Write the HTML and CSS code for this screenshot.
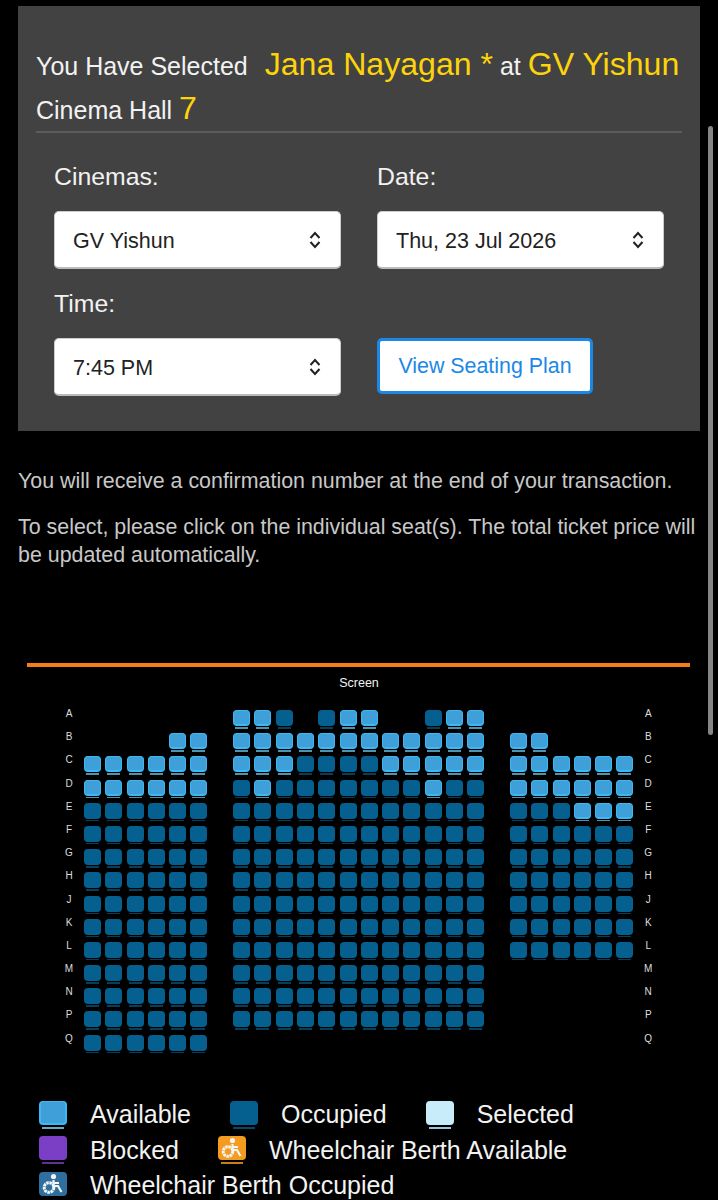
FILE: index.html
```html
<!DOCTYPE html>
<html lang="en">
<head>
  <meta charset="UTF-8">
  <meta name="viewport" content="width=device-width, initial-scale=1.0">
  <title>Seat Selection</title>
  <link rel="stylesheet" href="styles.css">
</head>
<body>
  <div class="scrollbar"></div>
  <section class="panel">
    <h1 class="summary">
      <span class="summary-line">You Have Selected <em class="first">Jana Nayagan *</em> at <em>GV Yishun</em></span>
      <span class="summary-line">Cinema Hall <em>7</em></span>
    </h1>
    <form class="filters">
      <div class="field">
        <label for="cinema">Cinemas:</label>
        <div class="select">
          <select id="cinema"><option>GV Yishun</option></select>
          <svg viewBox="0 0 12 18" width="12" height="18"><path d="M1.5 7 6 2l4.500 5M1.500 11 6 16l4.500-5"/></svg>
        </div>
      </div>
      <div class="field">
        <label for="date">Date:</label>
        <div class="select">
          <select id="date"><option>Thu, 23 Jul 2026</option></select>
          <svg viewBox="0 0 12 18" width="12" height="18"><path d="M1.5 7 6 2l4.500 5M1.500 11 6 16l4.500-5"/></svg>
        </div>
      </div>
      <div class="field">
        <label for="time">Time:</label>
        <div class="select">
          <select id="time"><option>7:45 PM</option></select>
          <svg viewBox="0 0 12 18" width="12" height="18"><path d="M1.5 7 6 2l4.500 5M1.500 11 6 16l4.500-5"/></svg>
        </div>
      </div>
      <div class="field field-button">
        <button type="button" class="view-btn">View Seating Plan</button>
      </div>
    </form>
  </section>

  <section class="notes">
    <p>You will receive a confirmation number at the end of your transaction.</p>
    <p>To select, please click on the individual seat(s). The total ticket price will be updated automatically.</p>
  </section>

  <section class="hall">
    <div class="screen"></div>
    <div class="screen-label">Screen</div>
    <div class="seats" id="seats"></div>
  </section>

  <section class="legend">
    <div class="legend-item"><span class="swatch available"><span class="face"></span><span class="bar"></span></span>Available</div>
    <div class="legend-item"><span class="swatch occupied"><span class="face"></span><span class="bar"></span></span>Occupied</div>
    <div class="legend-item"><span class="swatch selected"><span class="face"></span><span class="bar"></span></span>Selected</div>
    <div class="legend-item"><span class="swatch blocked"><span class="face"></span><span class="bar"></span></span>Blocked</div>
    <div class="legend-item"><span class="swatch wheel-free"><span class="face"><svg viewBox="0 0 28 24"><circle class="head" cx="14.500" cy="4.500" r="2.600"/><circle class="wheel" cx="10" cy="15.500" r="4.800"/><path d="M14.500 8v6h4.500l3.500 6M14.500 11h5.500"/></svg></span><span class="bar"></span></span>Wheelchair Berth Available</div>
    <div class="legend-item"><span class="swatch wheel-taken"><span class="face"><svg viewBox="0 0 28 24"><circle class="head" cx="14.500" cy="4.500" r="2.600"/><circle class="wheel" cx="10" cy="15.500" r="4.800"/><path d="M14.500 8v6h4.500l3.500 6M14.500 11h5.500"/></svg></span><span class="bar"></span></span>Wheelchair Berth Occupied</div>
  </section>

  <script src="script.js"></script>
</body>
</html>
```
FILE: styles.css
```css
/* Reset and base styling */
* { box-sizing: border-box; margin: 0; padding: 0; }
body {
  font-family: "Liberation Sans", Arial, sans-serif;
  background: #000;
  color: #f2f2f2;
  height: 1200px;
  overflow: hidden;
  padding-top: 6px;
}
.scrollbar {
  position: absolute;
  left: 708px;
  top: 126px;
  width: 5px;
  height: 609px;
  border-radius: 3px;
  background: #858585;
}

/* Top panel */
.panel {
  background: #424242;
  margin: 0 18px;
  height: 425px;
  padding: 36px 18px 0;
}
.summary {
  font-size: 25px;
  font-weight: normal;
  padding-bottom: 1px;
  border-bottom: 2px solid #5c5c5c;
}
.summary-line { display: block; height: 44px; line-height: 44px; white-space: nowrap; }
.summary em { font-style: normal; font-size: 32.100px; color: #fdd40a; }
.summary em.first { margin-left: 10px; }

.filters {
  display: grid;
  grid-template-columns: 287px 287px;
  column-gap: 36px;
  padding: 0 18px;
  margin-top: 27px;
}
.field { height: 127px; }
.field label {
  display: block;
  font-size: 24.800px;
  line-height: 34px;
  margin-bottom: 17px;
}
.field-button { padding-top: 51px; }
.select { position: relative; }
.select select {
  appearance: none;
  display: block;
  width: 100%;
  height: 58px;
  padding: 2px 18px 0;
  font: 21.500px "Liberation Sans", Arial, sans-serif;
  color: #222;
  background: #fff;
  border: 1px solid #ccc;
  border-bottom: 2px solid #bbb;
  border-radius: 5px;
}
.select svg {
  position: absolute;
  right: 20px;
  top: 20px;
  fill: none;
  stroke: #222;
  stroke-width: 2;
}
.view-btn {
  display: block;
  width: 216px;
  height: 56px;
  font: 21.400px "Liberation Sans", Arial, sans-serif;
  color: #1b87e6;
  background: #fff;
  border: 3px solid #1b87e6;
  border-radius: 5px;
}

/* Notes */
.notes {
  padding: 0 18px;
  margin-top: 36px;
  font-size: 21.400px;
  line-height: 28px;
  color: #c8c8c8;
}
.notes p { margin-bottom: 18px; }

/* Seat map */
.hall { margin-top: 94px; }
.screen {
  height: 4px;
  margin: 0 28px 0 27px;
  background: #f57f17;
}
.screen-label {
  text-align: center;
  font-size: 12.500px;
  line-height: 16px;
  margin-top: 8px;
}
.seats {
  display: grid;
  grid-template-columns: 30px repeat(26, 21.3px) 21px;
  grid-auto-rows: 23.2px;
  margin: 19px 0 0 54px;
}
.row-label {
  font-size: 10px;
  line-height: 7px;
  text-align: center;
  color: #ddd;
}
.seat::before {
  content: "";
  display: block;
  box-sizing: border-box;
  width: 17px;
  height: 16px;
  border-radius: 4px;
}
.seat::after {
  content: "";
  display: block;
  width: 13px;
  height: 1.500px;
  margin: 1px 0 0 2px;
}
.seat.on::before { background: #3f9fd8; border: 1px solid #3db9f2; border-bottom-width: 2px; }
.seat.on::after { background: #4d93b5; }
.seat.off::before { background: #05608f; }
.seat.off::after { background: #063f5c; }

/* Legend */
.legend {
  display: flex;
  flex-wrap: wrap;
  column-gap: 39px;
  padding-left: 39px;
  width: 690px;
  margin-top: 39px;
  font-size: 25px;
}
.legend-item {
  display: flex;
  align-items: center;
  height: 35.500px;
  white-space: nowrap;
}
.swatch { display: block; width: 28px; margin-right: 23px; }
.face { display: block; height: 24px; border-radius: 4px; }
.bar { display: block; height: 2px; margin: 2px 3px 0; }
.available .face { background: #3f9fd8; border: 2px solid #3db9f2; border-top-width: 1px; }
.available .bar { background: #6ba9c4; }
.occupied .face { background: #05608f; }
.occupied .bar { background: #06486b; }
.selected .face { background: #c9ecfb; }
.selected .bar { background: #9cc4d6; }
.blocked .face { background: #7a3fc4; }
.blocked .bar { background: #5f3196; }
.wheel-free .face { background: #f39c1f; }
.wheel-free .bar { background: #c67f18; }
.wheel-taken .face { background: #2f6f9f; }
.face svg { display: block; fill: none; stroke: #f4f4f4; stroke-width: 2.200; }
.face svg .head { fill: #f4f4f4; stroke: none; }
.face svg .wheel { stroke-width: 3; stroke-dasharray: 2.600 .6; }
```
FILE: script.js
```js
// a = available, o = occupied, space = no seat. 26 columns, two of them aisles.
const seatRows = [
  ['A', '       ' + 'aao oaa  oaa' + '       '],
  ['B', '    aa ' + 'aaaaaaaaaaaa' + ' aa    '],
  ['C', 'aaaaaa ' + 'aaaooooaaaaa' + ' aaaaaa'],
  ['D', 'aaaaaa ' + 'oaoooooooaoo' + ' aaaaaa'],
  ['E', 'oooooo ' + 'oooooooooooo' + ' oooaaa'],
  ['F', 'oooooo ' + 'oooooooooooo' + ' oooooo'],
  ['G', 'oooooo ' + 'oooooooooooo' + ' oooooo'],
  ['H', 'oooooo ' + 'oooooooooooo' + ' oooooo'],
  ['J', 'oooooo ' + 'oooooooooooo' + ' oooooo'],
  ['K', 'oooooo ' + 'oooooooooooo' + ' oooooo'],
  ['L', 'oooooo ' + 'oooooooooooo' + ' oooooo'],
  ['M', 'oooooo ' + 'oooooooooooo' + '       '],
  ['N', 'oooooo ' + 'oooooooooooo' + '       '],
  ['P', 'oooooo ' + 'oooooooooooo' + '       '],
  ['Q', 'oooooo ' + '            ' + '       ']
];

const seats = document.getElementById('seats');

function addLabel(text) {
  const label = document.createElement('div');
  label.className = 'row-label';
  label.textContent = text;
  seats.appendChild(label);
}

seatRows.forEach(([name, map]) => {
  addLabel(name);
  for (const ch of map) {
    const cell = document.createElement('div');
    if (ch === 'a') cell.className = 'seat on';
    if (ch === 'o') cell.className = 'seat off';
    seats.appendChild(cell);
  }
  addLabel(name);
});
```
